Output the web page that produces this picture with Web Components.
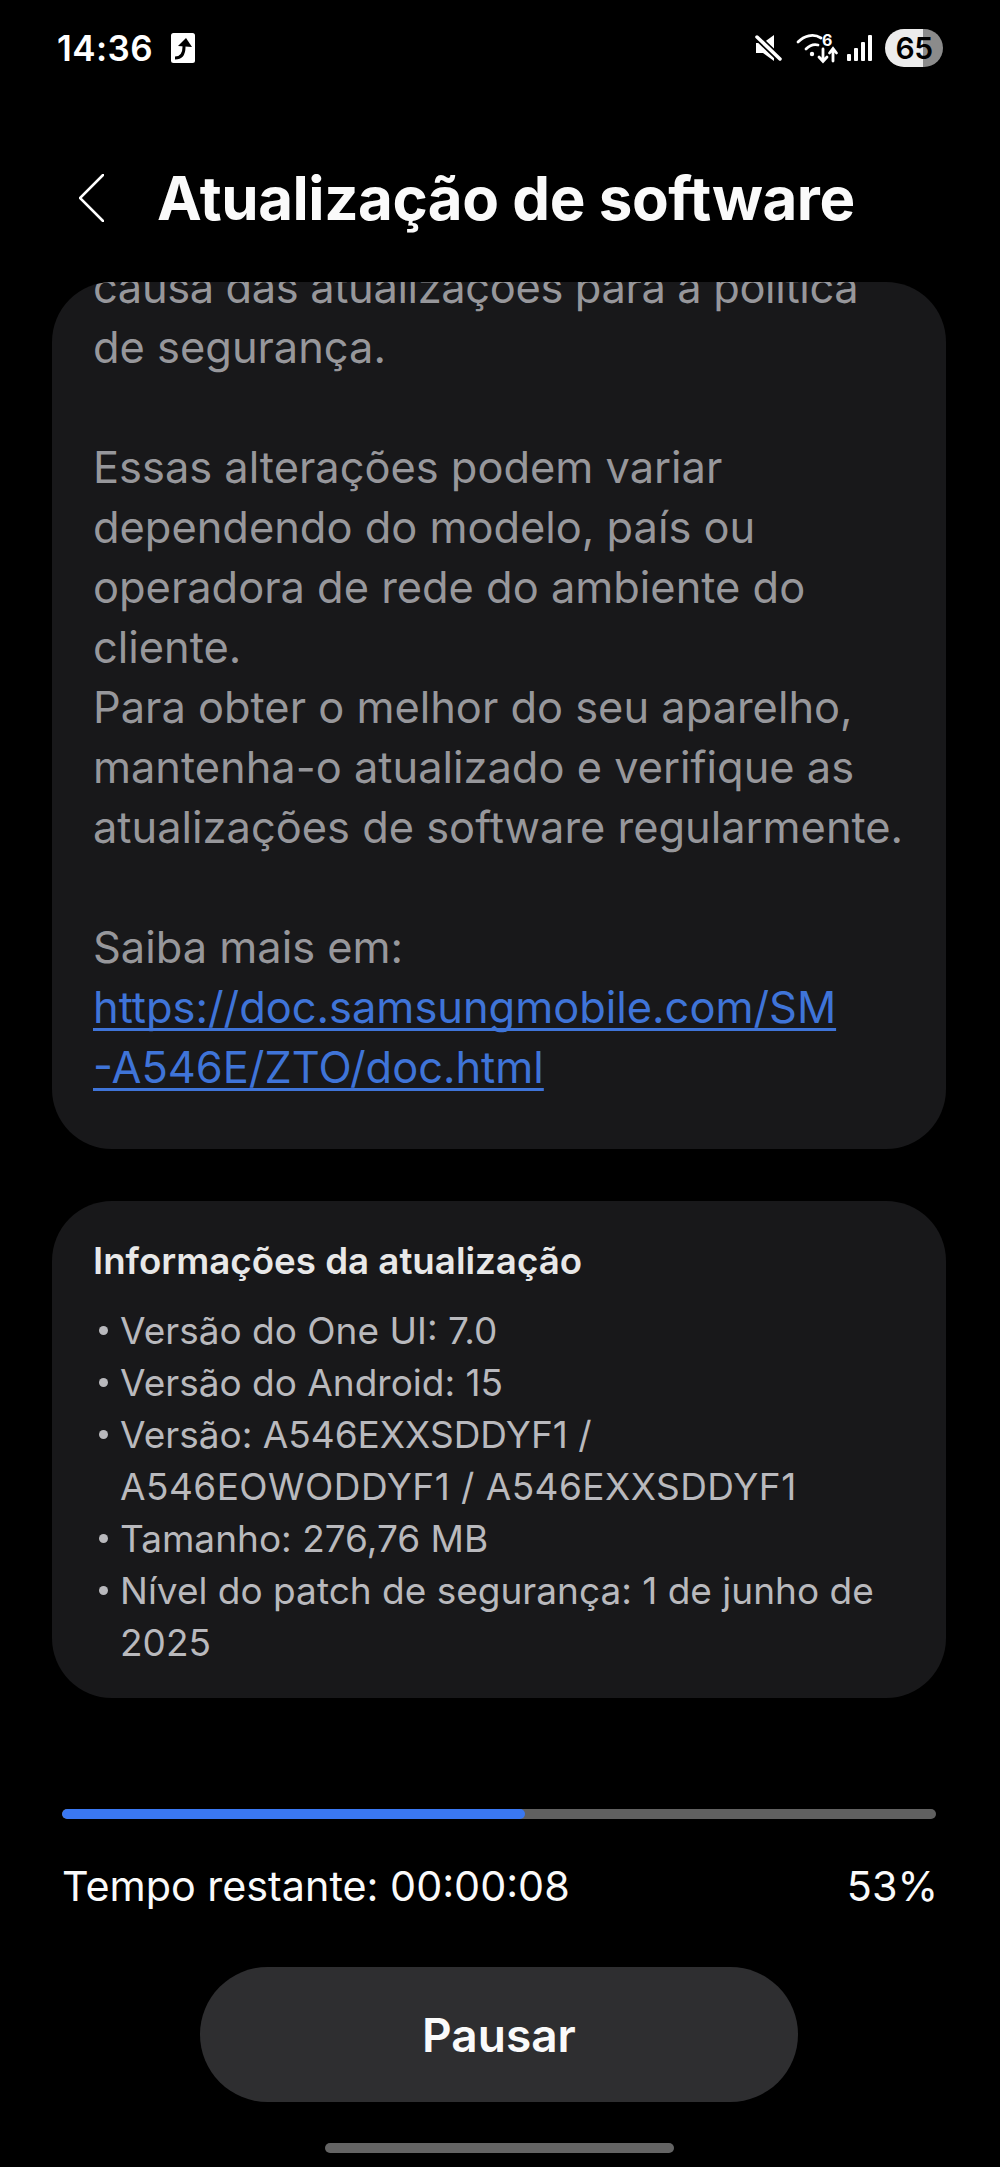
<!DOCTYPE html>
<html lang="pt">
<head>
<meta charset="utf-8">
<title>Atualização de software</title>
<style>
    html, body { margin: 0; background: #000; }
    body {
        width: 1000px;
        height: 2167px;
        overflow: hidden;
        display: flex;
        flex-direction: column;
        font-family: Inter, "Noto Sans", sans-serif;
        color: #fff;
    }
    .wide { letter-spacing: 0.45px; }
    .tight { letter-spacing: -0.35px; }
</style>
</head>
<body>
<status-bar></status-bar>
<app-header>Atualização de software</app-header>
<text-card>
    <span class="tight">causa das atualizações para a política</span><br>
    de segurança.<br>
    <br>
    Essas alterações podem variar<br>
    dependendo do modelo, país ou<br>
    operadora de rede do ambiente do<br>
    cliente.<br>
    Para obter o melhor do seu aparelho,<br>
    mantenha-o atualizado e verifique as<br>
    atualizações de software regularmente.<br>
    <br>
    Saiba mais em:<br>
    <a slot="link">https://doc.samsungmobile.com/SM<br>-A546E/ZTO/doc.html</a>
</text-card>
<info-card heading="Informações da atualização">
    <info-item>Versão do One UI: 7.0</info-item>
    <info-item>Versão do Android: 15</info-item>
    <info-item>Versão: A546EXXSDDYF1 /<br><span class="wide">A546EOWODDYF1 / A546EXXSDDYF1</span></info-item>
    <info-item>Tamanho: 276,76 MB</info-item>
    <info-item>Nível do patch de segurança: 1 de junho de<br>2025</info-item>
</info-card>
<update-progress value="53" remaining="Tempo restante: 00:00:08"></update-progress>
<pill-button>Pausar</pill-button>
<home-bar></home-bar>

<script>
class StatusBar extends HTMLElement {
    constructor() {
        super();
        this.attachShadow({mode: 'open'});
        this.shadowRoot.innerHTML = `
            <style>
                :host { display: flex; align-items: center; height: 96px; padding: 0 57px; box-sizing: border-box; }
                .time { width: 114px; font-size: 35px; font-weight: 600; letter-spacing: 0.4px; }
                .spacer { flex: 1; }
                svg { display: block; overflow: visible; }
                .mute { margin-right: 14px; }
                .net { margin-right: 10px; }
                .signal { margin-right: 13px; }
                .battery {
                    width: 58px; height: 38px; border-radius: 19px; color: #000; flex: none;
                    background: linear-gradient(to right, #ececec 66%, #8b8b8b 66%);
                    display: flex; align-items: center; justify-content: center;
                    font-size: 30px; font-weight: 600; letter-spacing: -0.5px;
                }
            </style>
            <span class="time">14:36</span>
            <svg width="24" height="30" viewBox="0 0 24 30">
                <rect width="24" height="30" rx="2.500" fill="#fff"/>
                <path fill="none" stroke="#000" stroke-width="3" d="M4 25c6 0 9-4 9-11v-3"/>
                <path fill="#000" d="M7 13l8-8 6 9z"/>
            </svg>
            <span class="spacer"></span>
            <svg class="mute" width="27" height="26" viewBox="0 0 27 26">
                <path fill="#fff" d="M1 8h7L19 0v26L8 18H1z"/>
                <path stroke="#000" stroke-width="7" d="M0 0l27 26"/>
                <path stroke="#fff" stroke-width="3.500" stroke-linecap="round" d="M2 2l23 22"/>
            </svg>
            <svg class="net" width="41" height="30" viewBox="0 0 41 30">
                <g fill="none" stroke="#fff" stroke-width="2.800" stroke-linecap="round">
                    <path d="M2 9C8 3 17 0 25 5"/>
                    <path d="M10 16c4-4 8-5 12-4"/>
                    <path d="M27 16v12M23 24l4 4.500 4-4.500"/>
                    <path d="M37 28V16M33.500 20l3.500-4.500 3.500 4.500"/>
                </g>
                <circle cx="16" cy="21" r="2.200" fill="#fff"/>
                <text x="26" y="12.500" font-size="16" font-weight="700" fill="#fff" font-family="Inter, sans-serif">6</text>
            </svg>
            <svg class="signal" width="25" height="26" viewBox="0 0 25 26" fill="#fff">
                <rect x="0" y="19" width="4" height="7" rx="1"/>
                <rect x="7" y="13" width="4" height="13" rx="1"/>
                <rect x="14" y="7" width="4" height="19" rx="1"/>
                <rect x="21" y="0" width="4" height="26" rx="1"/>
            </svg>
            <span class="battery">65</span>
        `;
    }
}

class AppHeader extends HTMLElement {
    constructor() {
        super();
        this.attachShadow({mode: 'open'});
        this.shadowRoot.innerHTML = `
            <style>
                :host { display: flex; align-items: center; gap: 53px; height: 186px; padding: 18px 0 0 79px; box-sizing: border-box; }
                svg { display: block; flex: none; }
                h1 { margin: 0; font-size: 60px; font-weight: 700; letter-spacing: -0.45px; white-space: nowrap; color: #fafafa; }
            </style>
            <svg width="25" height="48" viewBox="0 0 25 48">
                <path fill="none" stroke="#fff" stroke-width="2.500" stroke-linecap="round" d="M24 1L1 24l23 23"/>
            </svg>
            <h1><slot></slot></h1>
        `;
    }
}

class TextCard extends HTMLElement {
    constructor() {
        super();
        this.attachShadow({mode: 'open'});
        this.shadowRoot.innerHTML = `
            <style>
                :host {
                    display: block; height: 867px; margin: 0 54px 0 52px; border-radius: 60px;
                    background: #18181a; overflow: hidden; flex: none;
                }
                .body {
                    margin: -25px 0 0 41px; font-size: 43.400px; line-height: 60px;
                    color: #97979b; white-space: nowrap;
                }
                ::slotted(a) {
                    color: #3f74d8; text-decoration: underline; text-decoration-thickness: 3px;
                    text-underline-offset: 5px; text-decoration-skip-ink: none;
                }
            </style>
            <div class="body"><slot></slot><slot name="link"></slot></div>
        `;
    }
}

class InfoCard extends HTMLElement {
    constructor() {
        super();
        this.attachShadow({mode: 'open'});
        this.shadowRoot.innerHTML = `
            <style>
                :host {
                    display: block; margin: 52px 54px 0 52px; height: 497px; box-sizing: border-box;
                    padding: 36px 40px 0 41px; border-radius: 60px; background: #18181a; flex: none;
                }
                h2 { margin: 0 0 20px; font-size: 36.700px; line-height: 48px; font-weight: 600; color: #e8e8e8; }
            </style>
            <h2></h2>
            <slot></slot>
        `;
        this.shadowRoot.querySelector('h2').textContent = this.getAttribute('heading');
    }
}

class InfoItem extends HTMLElement {
    constructor() {
        super();
        this.attachShadow({mode: 'open'});
        this.shadowRoot.innerHTML = `
            <style>
                :host { display: flex; font-size: 37px; line-height: 52px; color: #b9b9bd; white-space: nowrap; }
                i { flex: none; width: 9px; height: 9px; margin: 21px 12px 0 6px; border-radius: 50%; background: #b9b9bd; }
            </style>
            <i></i><span><slot></slot></span>
        `;
    }
}

class UpdateProgress extends HTMLElement {
    constructor() {
        super();
        this.attachShadow({mode: 'open'});
        this.shadowRoot.innerHTML = `
            <style>
                :host { display: block; margin: 111px 64px 0 62px; flex: none; }
                .track { height: 10px; border-radius: 5px; background: #606060; overflow: hidden; }
                .fill { height: 100%; border-radius: 5px; background: #3a78f2; }
                .row { display: flex; justify-content: space-between; margin: 37px -2px 0 0; font-size: 41.300px; line-height: 60px; color: #fafafa; }
            </style>
            <div class="track"><div class="fill"></div></div>
            <div class="row"><span class="left"></span><span class="right"></span></div>
        `;
        const value = this.getAttribute('value');
        this.shadowRoot.querySelector('.fill').style.width = value + '%';
        this.shadowRoot.querySelector('.left').textContent = this.getAttribute('remaining');
        this.shadowRoot.querySelector('.right').textContent = value + '%';
    }
}

class PillButton extends HTMLElement {
    constructor() {
        super();
        this.attachShadow({mode: 'open'});
        this.shadowRoot.innerHTML = `
            <style>
                :host {
                    display: flex; align-items: center; justify-content: center; flex: none;
                    width: 598px; height: 135px; margin: 51px 0 0 200px; border-radius: 68px;
                    background: #2e2e30; color: #fafafa; font-size: 46px; font-weight: 600;
                }
            </style>
            <slot></slot>
        `;
    }
}

class HomeBar extends HTMLElement {
    constructor() {
        super();
        this.attachShadow({mode: 'open'});
        this.shadowRoot.innerHTML = `
            <style>
                :host { display: block; width: 349px; height: 10px; margin: 41px 0 0 325px; border-radius: 5px; background: #646464; flex: none; }
            </style>
        `;
    }
}

customElements.define('status-bar', StatusBar);
customElements.define('app-header', AppHeader);
customElements.define('text-card', TextCard);
customElements.define('info-card', InfoCard);
customElements.define('info-item', InfoItem);
customElements.define('update-progress', UpdateProgress);
customElements.define('pill-button', PillButton);
customElements.define('home-bar', HomeBar);
</script>
</body>
</html>
